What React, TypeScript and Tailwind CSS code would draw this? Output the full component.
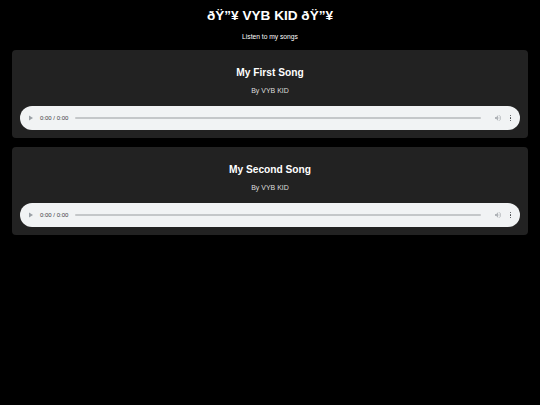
import React from "react";

function AudioBar() {
  return (
    <div className="flex h-[24px] items-center rounded-full bg-[#f1f3f4] pl-[8px] pr-[9px]">
      <svg width="6" height="6" viewBox="0 0 6 6" className="shrink-0">
        <path d="M1 0.5 L5 3 L1 5.5 Z" fill="#9aa0a6" />
      </svg>
      <span className="ml-[6px] shrink-0 text-[6px] leading-[6px] text-[#3c4043]">0:00 / 0:00</span>
      <div className="mx-[7px] h-[1.5px] flex-1 rounded-full bg-[#c4c7c9]" />
      <svg width="8" height="8" viewBox="0 0 24 24" className="ml-[6px] shrink-0">
        <path d="M3 9v6h4l5 5V4L7 9H3z" fill="#b0b4b8" />
        <path d="M16.5 12c0-1.8-1-3.3-2.5-4v8c1.5-.7 2.5-2.2 2.5-4z" fill="#b0b4b8" />
        <path d="M14 3.2v2.1c2.9.9 5 3.5 5 6.7s-2.1 5.8-5 6.7v2.1c4-.9 7-4.5 7-8.8s-3-7.9-7-8.8z" fill="#b0b4b8" />
      </svg>
      <div className="ml-[8px] flex shrink-0 flex-col gap-[1px]">
        <div className="h-[1.5px] w-[1.5px] rounded-full bg-[#3c4043]" />
        <div className="h-[1.5px] w-[1.5px] rounded-full bg-[#3c4043]" />
        <div className="h-[1.5px] w-[1.5px] rounded-full bg-[#3c4043]" />
      </div>
    </div>
  );
}

function SongCard({ title }: { title: string }) {
  return (
    <div className="flex flex-col rounded-[4px] bg-[#222222] px-[8px] pb-[8px] pt-[16px]">
      <h2 className="text-center text-[10.2px] font-bold leading-[14px] text-white">{title}</h2>
      <p className="mt-[6px] text-center text-[7px] leading-[10px] text-[#dddddd]">By VYB KID</p>
      <div className="mt-[10px]">
        <AudioBar />
      </div>
    </div>
  );
}

export default function App() {
  return (
    <div
      className="min-h-[405px] w-full bg-black px-[12px] pt-[8px] text-white"
      style={{ fontFamily: '"Liberation Sans", Arial, sans-serif' }}
    >
      <h1 className="text-center text-[13.6px] font-bold leading-[16px]">ðŸ”¥ VYB KID ðŸ”¥</h1>
      <p className="mt-[8px] text-center text-[6.7px] leading-[10px]">Listen to my songs</p>
      <div className="mt-[8px] flex flex-col gap-[9px]">
        <SongCard title="My First Song" />
        <SongCard title="My Second Song" />
      </div>
    </div>
  );
}
